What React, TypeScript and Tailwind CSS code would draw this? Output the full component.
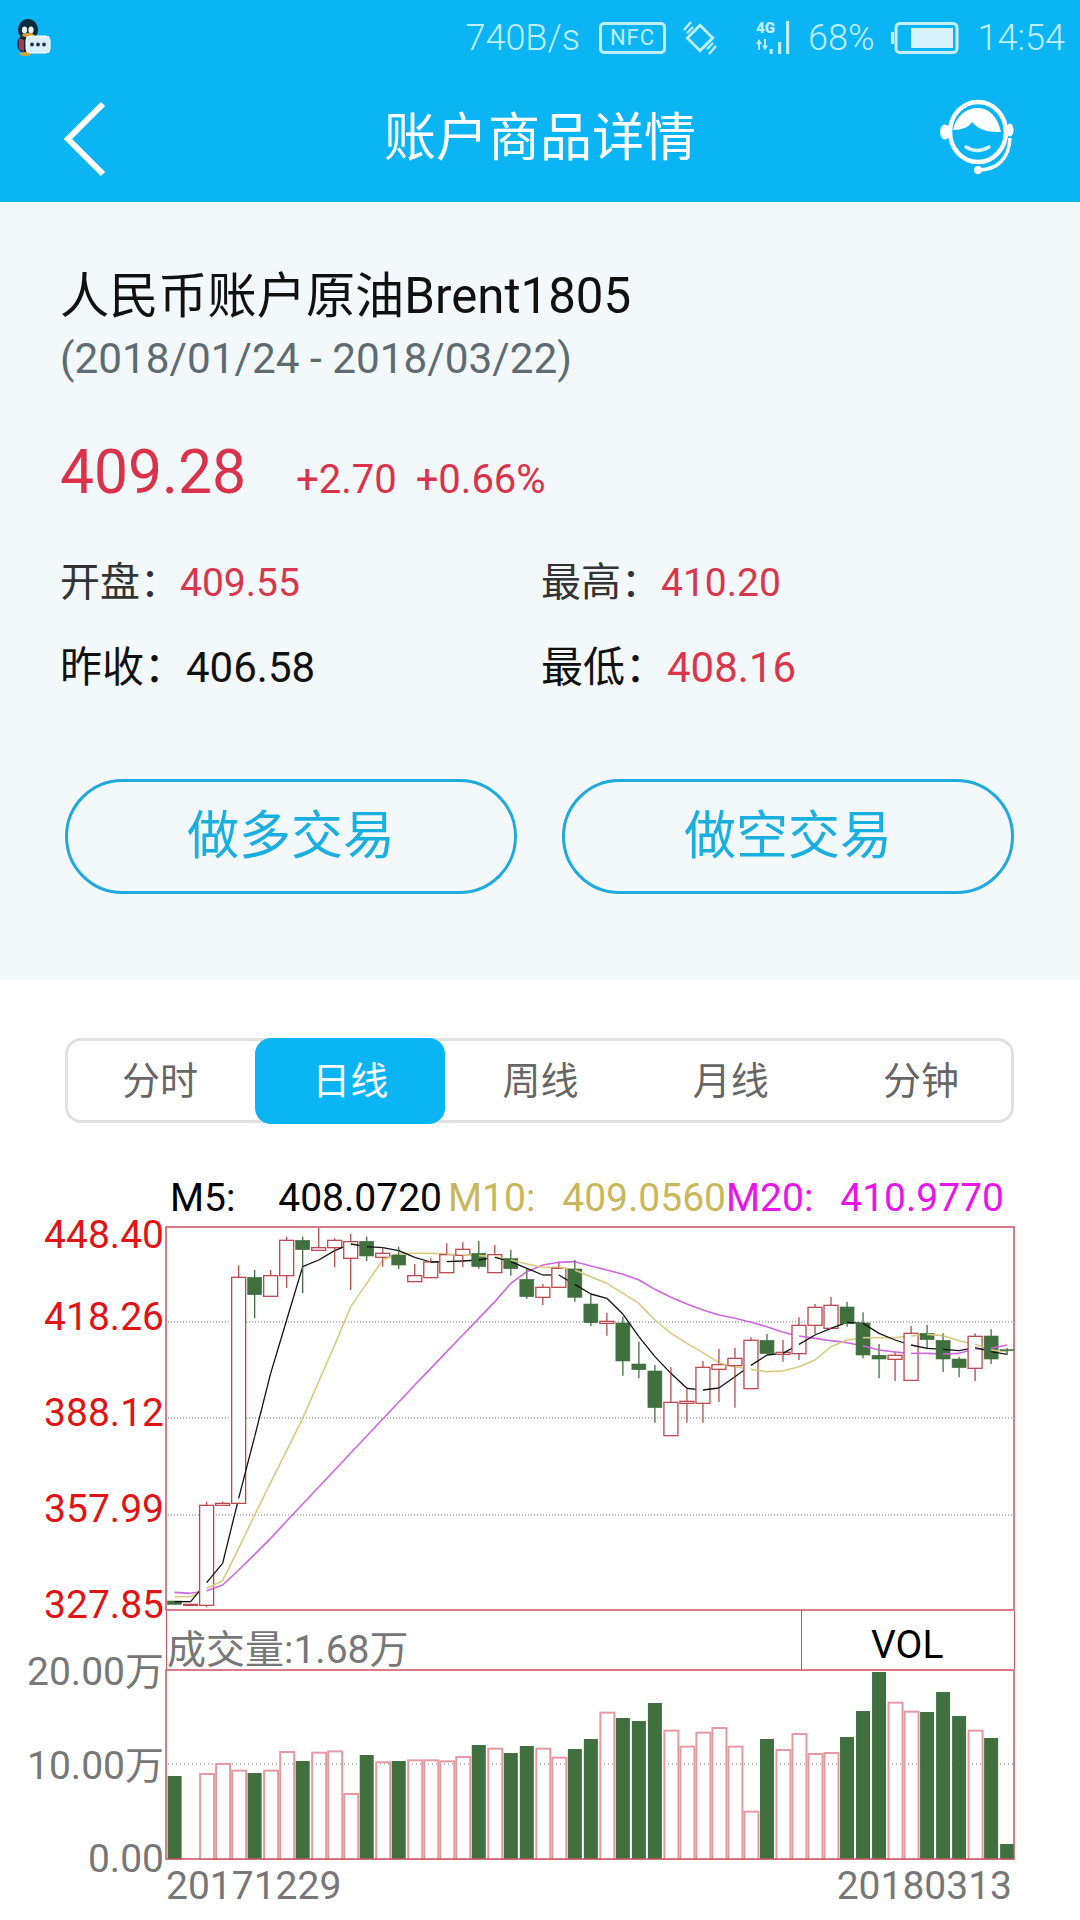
const M5 = [1325,1325,1268,1210,1015,830,640,480,320,300,272,252,260,263,272,292,306,305,303,300,292,305,325,345,345,373,402,415,462,530,590,640,685,690,684,650,616,585,580,553,525,505,487,490,520,540,555,565,568,572,563,575,583];
const M10 = [1310,1310,1285,1262,1165,1065,968,872,775,665,555,440,370,300,280,280,280,282,285,287,290,300,312,322,322,330,350,370,400,430,480,520,550,578,608,620,628,635,633,620,600,560,540,533,533,533,528,523,527,542,553,570,575];
const M20 = [1297,1300,1292,1275,1230,1183,1135,1083,1032,981,930,879,828,777,726,675,625,575,525,475,425,370,335,315,307,305,318,330,343,360,388,412,432,450,465,475,487,500,517,528,535,542,548,557,570,576,580,580,582,580,567,565,555];

// body top, body bottom, wick top, wick bottom, 1 = up (hollow)
const candles = [
  [1323,1333,1323,1333,0],[1333,1336,1333,1336,1],[1036,1336,1025,1342,1],[1030,1036,1025,1036,1],[352,1030,316,1030,1],
  [352,404,330,475,0],[347,409,330,409,1],[241,347,230,383,1],[241,269,230,400,0],[263,271,203,271,1],
  [241,263,235,322,1],[245,295,222,390,1],[244,288,230,303,0],[280,292,265,320,1],[285,315,260,327,0],
  [347,365,312,365,1],[306,353,295,355,1],[284,338,250,338,1],[268,286,247,322,1],[280,320,242,326,0],
  [284,338,255,338,1],[296,326,270,347,0],[358,410,325,416,0],[382,412,372,435,1],[325,382,305,382,1],
  [327,412,300,425,0],[432,488,400,498,0],[484,490,458,527,1],[489,603,470,647,0],[612,629,545,655,0],
  [633,743,615,788,0],[727,827,622,827,1],[724,730,685,788,1],[622,730,603,788,1],[614,628,566,726,1],
  [595,617,563,743,1],[541,686,532,686,1],[541,581,522,581,0],[577,583,540,605,1],[496,581,472,600,1],
  [442,496,432,522,1],[436,505,410,505,1],[441,491,425,500,0],[489,585,457,595,0],[586,597,552,655,0],
  [586,598,575,663,1],[520,661,498,661,1],[520,539,495,565,0],[541,597,520,636,0],[597,623,590,652,0],
  [529,625,520,663,1],[528,597,508,612,0],[569,572,565,585,0],
];

const volTops = [525,775,516,486,506,516,506,450,480,452,448,576,462,481,480,475,475,478,465,432,440,456,435,440,467,444,414,332,351,360,306,386,434,392,378,434,629,414,444,396,456,453,408,330,213,302,329,333,273,345,386,411,729];

const X = (i: number) => 174.6 + i * 16.01;
const Y = (z: number) => 1160 + z / 3;
const VY = (z: number) => 1600 + z / 3;

const RED = "#b84a4e";
const GREEN = "#41703f";
const FRAME = "#c9525f";

function CandleChart() {
  return (
    <svg width="850" height="385" viewBox="165 1226 850 385" className="block shrink-0">
      {[1322, 1418, 1515].map((y) => (
        <line key={y} x1="168" x2="1014" y1={y} y2={y} stroke="#a3a3a3" strokeWidth="1.5" strokeDasharray="1 2" />
      ))}
      {candles.map(([top, bottom, wickTop, wickBottom, up], i) => {
        const x = X(i);
        const color = up ? RED : GREEN;
        return (
          <g key={i}>
            <line x1={x} x2={x} y1={Y(wickTop)} y2={Y(wickBottom)} stroke={color} strokeWidth="1.3" />
            <rect x={x - 7} y={Y(top)} width="14" height={(bottom - top) / 3} fill={up ? "#fff" : GREEN} stroke={color} strokeWidth={up ? 1.3 : 0.6} />
            {i < 52 && (
              <>
                <line x1={x} x2={X(i + 1)} y1={Y(M20[i])} y2={Y(M20[i + 1])} stroke="#cc66dd" strokeWidth="1.6" />
                <line x1={x} x2={X(i + 1)} y1={Y(M10[i])} y2={Y(M10[i + 1])} stroke="#d9c97f" strokeWidth="1.6" />
                <line x1={x} x2={X(i + 1)} y1={Y(M5[i])} y2={Y(M5[i + 1])} stroke="#111" strokeWidth="1.3" />
              </>
            )}
          </g>
        );
      })}
      <rect x="166" y="1227" width="848" height="383" fill="none" stroke={FRAME} strokeWidth="1.5" />
    </svg>
  );
}

function VolumeChart() {
  return (
    <svg width="850" height="191" viewBox="165 1668 850 191" className="block shrink-0">
      <line x1="168" x2="1014" y1="1763" y2="1763" stroke="#a3a3a3" strokeWidth="1.5" strokeDasharray="1 3" />
      {volTops.map((top, i) => {
        const up = candles[i][4];
        const x = X(i);
        if (up) {
          return <rect key={i} x={x - 6.5} y={VY(top) + 1} width="14" height={(775 - top) / 3} fill="none" stroke="#e59aa2" strokeWidth="2" />;
        }
        return <rect key={i} x={x - 7} y={VY(top)} width="14" height={(775 - top) / 3} fill={GREEN} />;
      })}
      <rect x="166" y="1669" width="848" height="189" fill="none" stroke={FRAME} strokeWidth="1.5" />
    </svg>
  );
}

function QQIcon() {
  return (
    <svg width="36" height="38" viewBox="0 0 36 38" className="shrink-0">
      <ellipse cx="13" cy="11" rx="10" ry="11" fill="#0f2a3c" />
      <ellipse cx="12" cy="25" rx="10" ry="10" fill="#16293a" />
      <path d="M4 19 L9 21 L9 33 L4 30 Z" fill="#a43a4a" />
      <ellipse cx="9.5" cy="11" rx="2.6" ry="3.4" fill="#e8f4f4" />
      <ellipse cx="16" cy="11" rx="2.6" ry="3.4" fill="#e8f4f4" />
      <ellipse cx="13" cy="16" rx="6" ry="2" fill="#d9a437" />
      <ellipse cx="10" cy="35" rx="6" ry="2" fill="#c9a544" />
      <rect x="11" y="17" width="24" height="17" rx="4" fill="#d9effc" stroke="#fff" strokeWidth="1" />
      <circle cx="17" cy="25.5" r="1.9" fill="#234" />
      <circle cx="23" cy="25.5" r="1.9" fill="#234" />
      <circle cx="29" cy="25.5" r="1.9" fill="#234" />
    </svg>
  );
}

function RotateIcon() {
  return (
    <svg width="34" height="34" viewBox="0 0 34 34" fill="none" stroke="#c0effb" className="shrink-0">
      <rect x="8" y="8" width="18" height="18" strokeWidth="2.8" transform="rotate(45 17 17)" />
      <path d="M1 9 L8 1 M4 12 L10 6" strokeWidth="2.4" />
      <path d="M33 25 L26 33 M30 22 L24 28" strokeWidth="2.4" />
    </svg>
  );
}

function SignalIcon() {
  return (
    <svg width="34" height="34" viewBox="0 0 34 34" fill="#c0effb" className="shrink-0">
      <text x="0" y="12" fontSize="15" fontWeight="900" fontFamily="Roboto, sans-serif">4G</text>
      <path d="M3 18 L0 23 H2 V29 H4 V23 H6 Z M9 29 L6 24.5 H8 V18 H10 V24.5 H12 Z" />
      <rect x="13.5" y="28" width="3.2" height="5" />
      <rect x="22" y="21" width="3.2" height="12" />
      <rect x="30" y="0" width="3.2" height="33" />
    </svg>
  );
}

function BatteryIcon() {
  return (
    <svg width="68" height="32" viewBox="0 0 68 32" className="shrink-0">
      <rect x="0" y="10" width="3" height="12" fill="#c8f0fb" />
      <rect x="5" y="1.5" width="61" height="29" rx="4" fill="none" stroke="#c8f0fb" strokeWidth="3" />
      <rect x="20" y="6" width="42" height="20" fill="#d8f3fb" />
    </svg>
  );
}

function HeadsetIcon() {
  return (
    <svg width="140" height="110" viewBox="0 0 140 110" className="shrink-0">
      <ellipse cx="78" cy="52" rx="28" ry="30" fill="none" stroke="#fff" strokeWidth="4.5" />
      <path d="M53 50 C56 36 66 28 78 28 C90 28 98 38 101 52 C92 52 80 52 72 42 C69 47 62 50 53 50 Z" fill="#fff" />
      <ellipse cx="45" cy="52" rx="5" ry="7.5" fill="#fff" />
      <ellipse cx="110" cy="50" rx="3.5" ry="6.5" fill="#fff" />
      <path d="M110 58 C109 78 98 90 78 90" fill="none" stroke="#fff" strokeWidth="3.5" />
      <circle cx="78" cy="90" r="4" fill="#fff" />
      <path d="M66 67 Q77 74 89 67" fill="none" stroke="#d8f3fb" strokeWidth="3.5" strokeLinecap="round" />
    </svg>
  );
}

export default function App() {
  return (
    <div className="h-[1920px] w-[1080px] overflow-hidden bg-white font-['Roboto','Noto_Sans_CJK_SC',sans-serif]">
      <header className="h-[202px] bg-[#0bb5f3]">
        <div className="flex h-[76px] items-center pl-[15px] pr-[15px] text-[36px] font-light text-[#c0effb]">
          <QQIcon />
          <span className="ml-auto">740B/s</span>
          <span className="ml-[19px] flex h-[32px] w-[67px] items-center justify-center rounded-[5px] border-[3px] border-[#c0effb] text-[22px] leading-none font-normal tracking-[1px]">NFC</span>
          <span className="ml-[17px]"><RotateIcon /></span>
          <span className="ml-[39px]"><SignalIcon /></span>
          <span className="ml-[18px]">68%</span>
          <span className="ml-[16px]"><BatteryIcon /></span>
          <span className="ml-[19px]">14:54</span>
        </div>
        <div className="grid h-[126px] grid-cols-[1fr_auto_1fr] items-center">
          <div className="pl-[60px]">
            <svg width="50" height="76" viewBox="0 0 50 76" fill="none" stroke="#fff" strokeWidth="6" className="block">
              <path d="M43 3 L8 38 L43 73" />
            </svg>
          </div>
          <h1 className="text-[52px] leading-[60px] font-normal text-white">账户商品详情</h1>
          <div className="flex justify-end pr-[40px] pb-[8px]">
            <HeadsetIcon />
          </div>
        </div>
      </header>

      <section className="h-[778px] bg-[#f3f9fb] px-[60px] pt-[64px]">
        <h2 className="text-[49.2px] leading-[60px] font-normal text-[#111]">人民币账户原油Brent1805</h2>
        <p className="mt-[8px] text-[42.3px] leading-[50px] text-[#5f6b73]">(2018/01/24 - 2018/03/22)</p>
        <div className="mt-[54px] flex items-baseline text-[#d9324a]">
          <span className="text-[60.5px] leading-[70px]">409.28</span>
          <span className="ml-[50px] text-[40px]">+2.70</span>
          <span className="ml-[19px] text-[40px]">+0.66%</span>
        </div>
        <div className="mt-[48px] grid grid-cols-[481px_1fr] text-[40px] leading-[50px] text-[#333]">
          <div>开盘：<span className="text-[39px] text-[#d9364b]">409.55</span></div>
          <div>最高：<span className="text-[39px] text-[#d9364b]">410.20</span></div>
        </div>
        <div className="mt-[35px] grid grid-cols-[481px_1fr] text-[42px] leading-[50px] text-[#111]">
          <div>昨收：406.58</div>
          <div>最低：<span className="text-[#d9364b]">408.16</span></div>
        </div>
        <div className="mt-[86px] flex gap-[45px] pl-[5px]">
          <button className="h-[115px] w-[452px] rounded-full border-[3px] border-[#1fa9dc] text-[52px] text-[#1bafe0]">做多交易</button>
          <button className="h-[115px] w-[452px] rounded-full border-[3px] border-[#1fa9dc] text-[52px] text-[#1bafe0]">做空交易</button>
        </div>
      </section>

      <section className="pt-[58px]">
        <div className="ml-[65px] h-[85px] w-[949px] rounded-[16px] border-[3px] border-[#e0e0e0]">
          <div className="-mr-[5px] -ml-[3px] grid h-[79px] grid-cols-5 items-center text-center text-[38px] text-[#666]">
            <div>分时</div>
            <div className="-my-[3px] flex h-[86px] items-center justify-center rounded-[16px] bg-[#0bb5f3] text-white">日线</div>
            <div>周线</div>
            <div>月线</div>
            <div>分钟</div>
          </div>
        </div>

        <div className="mt-[53px] ml-[170px] grid h-[44px] w-[834px] grid-cols-3 text-[39px] leading-[44px]">
          <div className="flex justify-between pr-[6px] text-black"><span>M5:</span><span>408.0720</span></div>
          <div className="flex justify-between text-[#c8b85a]"><span>M10:</span><span>409.0560</span></div>
          <div className="flex justify-between text-[#e815e8]"><span>M20:</span><span>410.9770</span></div>
        </div>

        <div className="mt-[6px] flex h-[385px]">
          <div className="w-[165px] pr-[1px] text-right text-[39px] leading-[40px] text-[#e01414]">
            <div className="-mt-[11px]">448.40</div>
            <div className="mt-[42px]">418.26</div>
            <div className="mt-[56px]">388.12</div>
            <div className="mt-[56px]">357.99</div>
            <div className="mt-[56px]">327.85</div>
          </div>
          <CandleChart />
        </div>

        <div className="ml-[166px] flex h-[58px] w-[849px] border-x-[1.5px] border-[#c9525f] text-[39px] leading-[38px]">
          <div className="flex-1 pt-[20px] text-[#777]">成交量:1.68万</div>
          <div className="w-[213px] border-l-[1.5px] border-[#c9525f] pt-[15px] pl-[69px] text-black">VOL</div>
        </div>

        <div className="flex h-[191px]">
          <div className="w-[165px] pr-[1px] text-right text-[39px] leading-[40px] text-[#777]">
            <div className="-mt-[17px]">20.00万</div>
            <div className="mt-[54px]">10.00万</div>
            <div className="mt-[53px]">0.00</div>
          </div>
          <VolumeChart />
        </div>

        <div className="flex justify-between pt-[6px] pr-[68px] pl-[166px] text-[39px] leading-[40px] text-[#777]">
          <span>20171229</span>
          <span>20180313</span>
        </div>
      </section>
    </div>
  );
}
